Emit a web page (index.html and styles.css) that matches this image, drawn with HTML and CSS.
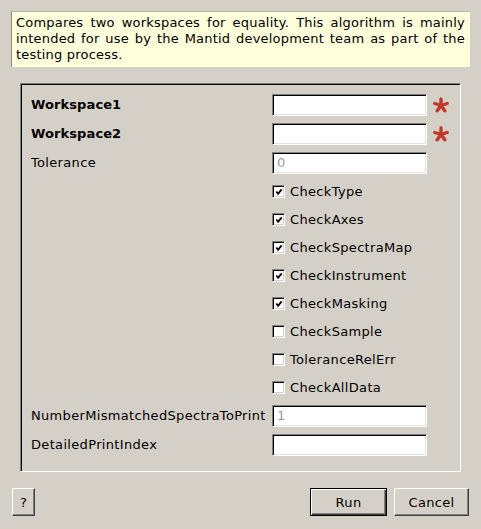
FILE: index.html
```html
<!DOCTYPE html>
<html>
<head>
<meta charset="utf-8">
<link rel="stylesheet" href="styles.css">
</head>
<body>
<div class="desc">Compares two workspaces for equality. This algorithm is mainly intended for use by the Mantid development team as part of the testing process.</div>

<div class="frame">
  <div class="form">
    <div class="label bold">Workspace1</div>
    <div class="input"></div>
    <svg class="star" viewBox="0 0 16 16"><g stroke="#c0392b" stroke-width="3.4" stroke-linecap="round"><line x1="8" y1="8.5" x2="8" y2="2"/><line x1="8" y1="8.5" x2="14.2" y2="6.5"/><line x1="8" y1="8.5" x2="11.8" y2="13.8"/><line x1="8" y1="8.5" x2="4.2" y2="13.8"/><line x1="8" y1="8.5" x2="1.8" y2="6.5"/></g></svg>

    <div class="label bold">Workspace2</div>
    <div class="input"></div>
    <svg class="star" viewBox="0 0 16 16"><g stroke="#c0392b" stroke-width="3.4" stroke-linecap="round"><line x1="8" y1="8.5" x2="8" y2="2"/><line x1="8" y1="8.5" x2="14.2" y2="6.5"/><line x1="8" y1="8.5" x2="11.8" y2="13.8"/><line x1="8" y1="8.5" x2="4.2" y2="13.8"/><line x1="8" y1="8.5" x2="1.8" y2="6.5"/></g></svg>

    <div class="label">Tolerance</div>
    <div class="input"><span class="ph">0</span></div>
    <div></div>

    <div></div>
    <div class="check"><span class="box on"><svg viewBox="0 0 9 9"><polyline points="1.5,4 3.5,6.5 7.5,1.5" fill="none" stroke="#000" stroke-width="2"/></svg></span>CheckType</div>
    <div></div>
    <div class="check"><span class="box on"><svg viewBox="0 0 9 9"><polyline points="1.5,4 3.5,6.5 7.5,1.5" fill="none" stroke="#000" stroke-width="2"/></svg></span>CheckAxes</div>
    <div></div>
    <div class="check"><span class="box on"><svg viewBox="0 0 9 9"><polyline points="1.5,4 3.5,6.5 7.5,1.5" fill="none" stroke="#000" stroke-width="2"/></svg></span>CheckSpectraMap</div>
    <div></div>
    <div class="check"><span class="box on"><svg viewBox="0 0 9 9"><polyline points="1.5,4 3.5,6.5 7.5,1.5" fill="none" stroke="#000" stroke-width="2"/></svg></span>CheckInstrument</div>
    <div></div>
    <div class="check"><span class="box on"><svg viewBox="0 0 9 9"><polyline points="1.5,4 3.5,6.5 7.5,1.5" fill="none" stroke="#000" stroke-width="2"/></svg></span>CheckMasking</div>
    <div></div>
    <div class="check"><span class="box"></span>CheckSample</div>
    <div></div>
    <div class="check"><span class="box"></span>ToleranceRelErr</div>
    <div></div>
    <div class="check"><span class="box"></span>CheckAllData</div>

    <div class="label">NumberMismatchedSpectraToPrint</div>
    <div class="input"><span class="ph">1</span></div>
    <div></div>

    <div class="label">DetailedPrintIndex</div>
    <div class="input"></div>
    <div></div>
  </div>
</div>

<div class="buttons">
  <div class="btn help">?</div>
  <div class="spacer"></div>
  <div class="btn run default">Run</div>
  <div class="btn cancel">Cancel</div>
</div>
</body>
</html>
```

FILE: styles.css
```css
html, body {
  margin: 0;
  padding: 0;
  background: #d4d0c8;
}
body {
  font-family: "DejaVu Sans", sans-serif;
  font-size: 13px;
  color: #000;
  width: 481px;
  height: 529px;
  overflow: hidden;
  letter-spacing: 0.33px;
}
.desc {
  margin: 11px 11px 0 11px;
  background: #ffffdc;
  border-left: 1px solid #8a8a8a;
  border-top: 1px solid #b8b8b0;
  padding: 3px 5px 4px 4px;
  line-height: 16px;
  text-align: justify;
  letter-spacing: 0.2px;
}
.frame {
  margin: 16px 20px 0 20px;
  border-top: 1px solid #808080;
  border-left: 1px solid #808080;
  border-right: 1px solid #fff;
  border-bottom: 1px solid #fff;
  box-shadow: inset 1px 1px 0 #000;
  padding: 10px 0 15px 10px;
}
.form {
  display: grid;
  grid-template-columns: 241px 155px 22px;
  row-gap: 7px;
  align-items: center;
}
.label {
  white-space: nowrap;
  line-height: 22px;
}
.bold {
  font-weight: bold;
  letter-spacing: 0.1px;
}
.input {
  height: 22px;
  box-sizing: border-box;
  background: #fff;
  border-top: 1px solid #808080;
  border-left: 1px solid #808080;
  border-right: 1px solid #fff;
  border-bottom: 1px solid #fff;
  box-shadow: inset 1px 1px 0 #000, inset -1px -1px 0 #e4e2dc;
  padding-left: 4px;
  line-height: 20px;
}
.ph {
  color: #9a9a9a;
}
.star {
  width: 16px;
  height: 16px;
  justify-self: end;
}
.check {
  grid-column: 2 / 4;
  height: 21px;
  display: flex;
  align-items: center;
  gap: 5px;
  white-space: nowrap;
}
.box {
  width: 13px;
  height: 13px;
  box-sizing: border-box;
  background: #fff;
  border-top: 1px solid #808080;
  border-left: 1px solid #808080;
  border-right: 1px solid #fff;
  border-bottom: 1px solid #fff;
  box-shadow: inset 1px 1px 0 #000, inset -1px -1px 0 #d4d0c8;
  display: flex;
  align-items: center;
  justify-content: center;
}
.box svg {
  width: 8px;
  height: 8px;
}
.buttons {
  display: flex;
  margin-top: 16px;
  padding: 0 12px;
  gap: 7px;
}
.spacer {
  flex: 1;
}
.btn {
  height: 28px;
  box-sizing: border-box;
  display: flex;
  align-items: center;
  justify-content: center;
  border-top: 1px solid #fff;
  border-left: 1px solid #fff;
  border-right: 1px solid #404040;
  border-bottom: 1px solid #404040;
  box-shadow: inset -1px -1px 0 #808080;
}
.help {
  width: 23px;
}
.run {
  width: 77px;
}
.cancel {
  width: 75px;
}
.default {
  border: 1px solid #000;
  box-shadow: inset 1px 1px 0 #fff, inset -1px -1px 0 #404040, inset -2px -2px 0 #808080;
}
```
